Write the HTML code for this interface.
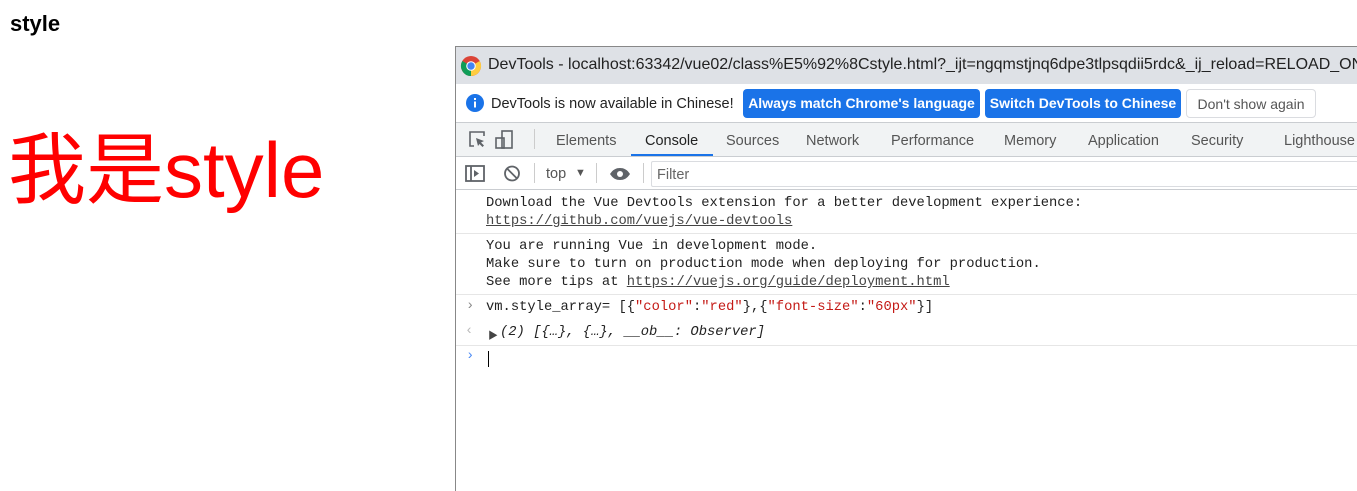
<!DOCTYPE html>
<html><head><meta charset="utf-8"><style>
body{margin:0;width:1357px;height:490px;background:#fff;position:relative;overflow:hidden;font-family:"Liberation Sans","Noto Sans CJK SC",sans-serif}
.a{position:absolute;white-space:nowrap}
.m{font-family:"Liberation Mono",monospace;font-size:13.8px;color:#222}
.tab{position:absolute;top:133px;font-size:14.5px;color:#555}
.btn{position:absolute;top:89px;height:29px;border-radius:4px;font-size:14px;font-weight:bold;line-height:29px;text-align:center}
u{text-decoration:underline;color:#444}
</style></head><body>
<div class="a" style="left:10px;top:11px;font-size:22px;font-weight:bold">style</div>
<div class="a" style="left:8px;top:124px;font-size:78px;color:#f00;line-height:92px">我是style</div>

<div class="a" style="left:455px;top:46px;width:902px;height:444px;border-left:1px solid #888;border-top:1px solid #888;background:#fff"></div>
<div class="a" style="left:456px;top:47px;width:901px;height:37px;background:#dee1e6"></div>
<svg class="a" style="left:460px;top:55px" width="22" height="22" viewBox="0 0 22 22"><circle cx="11" cy="11" r="10" fill="#db4437"/><path d="M11 11 L2.3 16 A10 10 0 0 0 11 21 Z" fill="#0f9d58"/><path d="M11 11 L11 21 A10 10 0 0 0 19.7 6 Z" fill="#ffcd40"/><path d="M2.3 16 A10 10 0 0 1 2.3 6 L11 11Z" fill="#0f9d58"/><circle cx="11" cy="11" r="4.8" fill="#fff"/><circle cx="11" cy="11" r="3.7" fill="#4285f4"/></svg>
<div class="a" style="left:488px;top:56px;font-size:16px;color:#222">DevTools - localhost:63342/vue02/class%E5%92%8Cstyle.html?_ijt=ngqmstjnq6dpe3tlpsqdii5rdc&amp;_ij_reload=RELOAD_ON_SAVE</div>

<div class="a" style="left:456px;top:122px;width:901px;height:1px;background:#cacdd1"></div>
<svg class="a" style="left:466px;top:94px" width="18" height="18"><circle cx="9" cy="9" r="9" fill="#1a73e8"/><rect x="8" y="7.5" width="2" height="6" fill="#fff"/><rect x="8" y="4" width="2" height="2" fill="#fff"/></svg>
<div class="a" style="left:491px;top:96px;font-size:14.5px;color:#222">DevTools is now available in Chinese!</div>
<div class="btn" style="left:743px;width:237px;background:#1a73e8;color:#fff">Always match Chrome's language</div>
<div class="btn" style="left:985px;width:196px;background:#1a73e8;color:#fff">Switch DevTools to Chinese</div>
<div class="btn" style="left:1186px;width:128px;border:1px solid #dadce0;height:27px;color:#555;font-weight:normal">Don't show again</div>

<div class="a" style="left:456px;top:123px;width:901px;height:33px;background:#f1f3f4;border-bottom:1px solid #cacdd1"></div>
<svg class="a" style="left:467px;top:129px" width="60" height="22" fill="none" stroke="#5f6368" stroke-width="1.6"><path d="M7 17H3V3h14v4"/><path d="M9 9l8 3-3 1.5 3 3-1.5 1.5-3-3L11 17z" fill="#5f6368" stroke="none"/><rect x="35" y="2" width="10" height="17"/><rect x="29" y="9" width="8" height="10"/></svg>
<div class="a" style="left:534px;top:129px;width:1px;height:20px;background:#ccc"></div>
<div class="tab" style="left:556px">Elements</div>
<div class="tab" style="left:645px;color:#222">Console</div>
<div class="a" style="left:631px;top:154px;width:82px;height:2px;background:#1a73e8"></div>
<div class="tab" style="left:726px">Sources</div>
<div class="tab" style="left:806px">Network</div>
<div class="tab" style="left:891px">Performance</div>
<div class="tab" style="left:1004px">Memory</div>
<div class="tab" style="left:1088px">Application</div>
<div class="tab" style="left:1191px">Security</div>
<div class="tab" style="left:1284px">Lighthouse</div>

<div class="a" style="left:456px;top:189px;width:901px;height:1px;background:#cacdd1"></div>
<svg class="a" style="left:465px;top:164px" width="160" height="20" fill="none" stroke="#5f6368" stroke-width="1.8"><rect x="1" y="2" width="18" height="15"/><path d="M6 2v15"/><path d="M9 6l5 3.5-5 3.5z" fill="#5f6368" stroke="none"/><circle cx="47" cy="9.5" r="7"/><path d="M42 4.5l10 10"/></svg>
<svg class="a" style="left:609px;top:166px" width="22" height="16"><path d="M1 8c3-4.5 6-6 10-6s7 1.5 10 6c-3 4.5-6 6-10 6s-7-1.5-10-6z" fill="#5f6368"/><circle cx="11" cy="8" r="3" fill="#fff"/></svg>
<div class="a" style="left:534px;top:163px;width:1px;height:20px;background:#ccc"></div>
<div class="a" style="left:546px;top:166px;font-size:14.5px;color:#555">top</div>
<div class="a" style="left:575px;top:167px;font-size:11px;color:#555">▼</div>
<div class="a" style="left:596px;top:163px;width:1px;height:20px;background:#ccc"></div>
<div class="a" style="left:643px;top:163px;width:1px;height:20px;background:#ccc"></div>
<div class="a" style="left:651px;top:161px;width:706px;height:24px;border:1px solid #dadce0;border-right:none;border-radius:2px"></div>
<div class="a" style="left:657px;top:167px;font-size:14.5px;color:#666">Filter</div>

<div class="a m" style="left:486px;top:196px">Download the Vue Devtools extension for a better development experience:</div>
<div class="a m" style="left:486px;top:214px"><u>https://github.com/vuejs/vue-devtools</u></div>
<div class="a" style="left:456px;top:233px;width:901px;height:1px;background:#e6e6e6"></div>
<div class="a m" style="left:486px;top:239px">You are running Vue in development mode.</div>
<div class="a m" style="left:486px;top:257px">Make sure to turn on production mode when deploying for production.</div>
<div class="a m" style="left:486px;top:275px">See more tips at <u>https://vuejs.org/guide/deployment.html</u></div>
<div class="a" style="left:456px;top:294px;width:901px;height:1px;background:#e6e6e6"></div>
<div class="a m" style="left:466px;top:299px;color:#888">›</div>
<div class="a m" style="left:486px;top:300px">vm.style_array= [{<span style="color:#c41a16">"color"</span>:<span style="color:#c41a16">"red"</span>},{<span style="color:#c41a16">"font-size"</span>:<span style="color:#c41a16">"60px"</span>}]</div>
<div class="a m" style="left:465px;top:324px;color:#bbb">‹</div>
<div class="a" style="left:488px;top:327px;font-size:10px;color:#444">▶</div>
<div class="a m" style="left:500px;top:325px;font-style:italic">(2) [{…}, {…}, __ob__: Observer]</div>
<div class="a" style="left:456px;top:345px;width:901px;height:1px;background:#e6e6e6"></div>
<div class="a m" style="left:466px;top:349px;color:#4a8af4">›</div>
<div class="a" style="left:488px;top:351px;width:1px;height:16px;background:#000"></div>
</body></html>
